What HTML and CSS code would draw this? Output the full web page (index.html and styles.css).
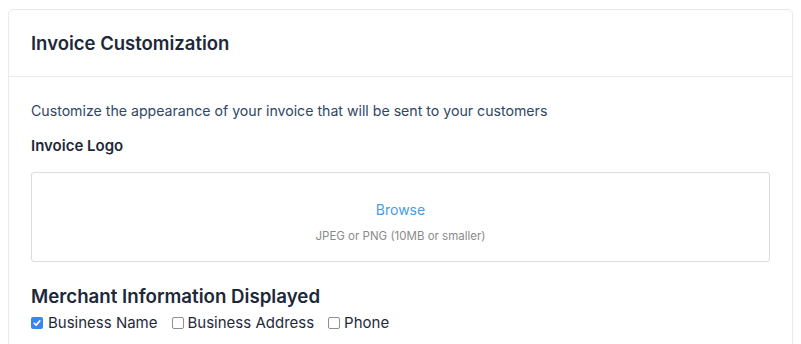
FILE: index.html
```html
<!DOCTYPE html>
<html>
<head>
<meta charset="utf-8">
<link rel="stylesheet" href="styles.css">
</head>
<body>
<div class="card">
  <div class="card-header">
    <h2 class="title">Invoice Customization</h2>
  </div>
  <div class="card-body">
    <p class="desc">Customize the appearance of your invoice that will be sent to your customers</p>
    <h3 class="label">Invoice Logo</h3>
    <div class="upload">
      <span class="browse">Browse</span>
      <span class="hint">JPEG or PNG (10MB or smaller)</span>
    </div>
    <h3 class="section">Merchant Information Displayed</h3>
    <div class="checks">
      <label class="check checked-label"><span class="box checked"><svg viewBox="0 0 12 12" width="12" height="12"><path d="M3.2 6.2 L5.1 8.1 L8.8 3.9" fill="none" stroke="#fff" stroke-width="1.6" stroke-linecap="round" stroke-linejoin="round"/></svg></span>Business Name</label>
      <label class="check"><span class="box"></span>Business Address</label>
      <label class="check"><span class="box"></span>Phone</label>
    </div>
  </div>
</div>
</body>
</html>
```

FILE: styles.css
```css
html, body {
  margin: 0;
  padding: 0;
  background: #fff;
}
body {
  padding: 9px 8px 0 8px;
  font-family: "Inter", "Liberation Sans", sans-serif;
  color: #1f2a3c;
}
.card {
  border: 1px solid #e8eaed;
  border-radius: 5px;
  height: 340px;
}
.card-header {
  height: 66px;
  border-bottom: 1px solid #e8eaed;
  display: flex;
  align-items: center;
  padding: 0 22px;
}
.title {
  margin: 0;
  font-size: 18.5px;
  font-weight: 600;
  color: #1d2838;
}
.card-body {
  padding: 24px 22px 0 22px;
}
.desc {
  margin: 0;
  font-size: 14.15px;
  line-height: 20px;
  color: #2f4766;
}
.label {
  margin: 15px 0 0 0;
  font-size: 15px;
  line-height: 20px;
  font-weight: 600;
  color: #1d2838;
}
.upload {
  margin-top: 16px;
  height: 61px;
  padding-top: 27px;
  border: 1px solid #dcdcdc;
  border-radius: 3px;
  display: flex;
  flex-direction: column;
  align-items: center;
  gap: 9px;
}
.browse {
  font-size: 14px;
  line-height: 20px;
  color: #4a9be6;
}
.hint {
  font-size: 11.5px;
  line-height: 14px;
  color: #8a8a8a;
}
.section {
  margin: 23px 0 0 0;
  font-size: 18.7px;
  line-height: 24px;
  font-weight: 600;
  color: #1d2838;
}
.checks {
  display: flex;
  gap: 14px;
  margin-top: 4px;
}
.check {
  display: flex;
  align-items: center;
  gap: 4px;
  font-size: 15px;
  line-height: 20px;
  color: #1f2a3c;
}
.checked-label {
  gap: 5px;
}
.box {
  width: 10px;
  height: 10px;
  border: 1px solid #8a8f98;
  border-radius: 2px;
  display: inline-flex;
  align-items: center;
  justify-content: center;
  background: #fff;
}
.box.checked {
  width: 12px;
  height: 12px;
  border: none;
  background: #3a86f0;
}
```
